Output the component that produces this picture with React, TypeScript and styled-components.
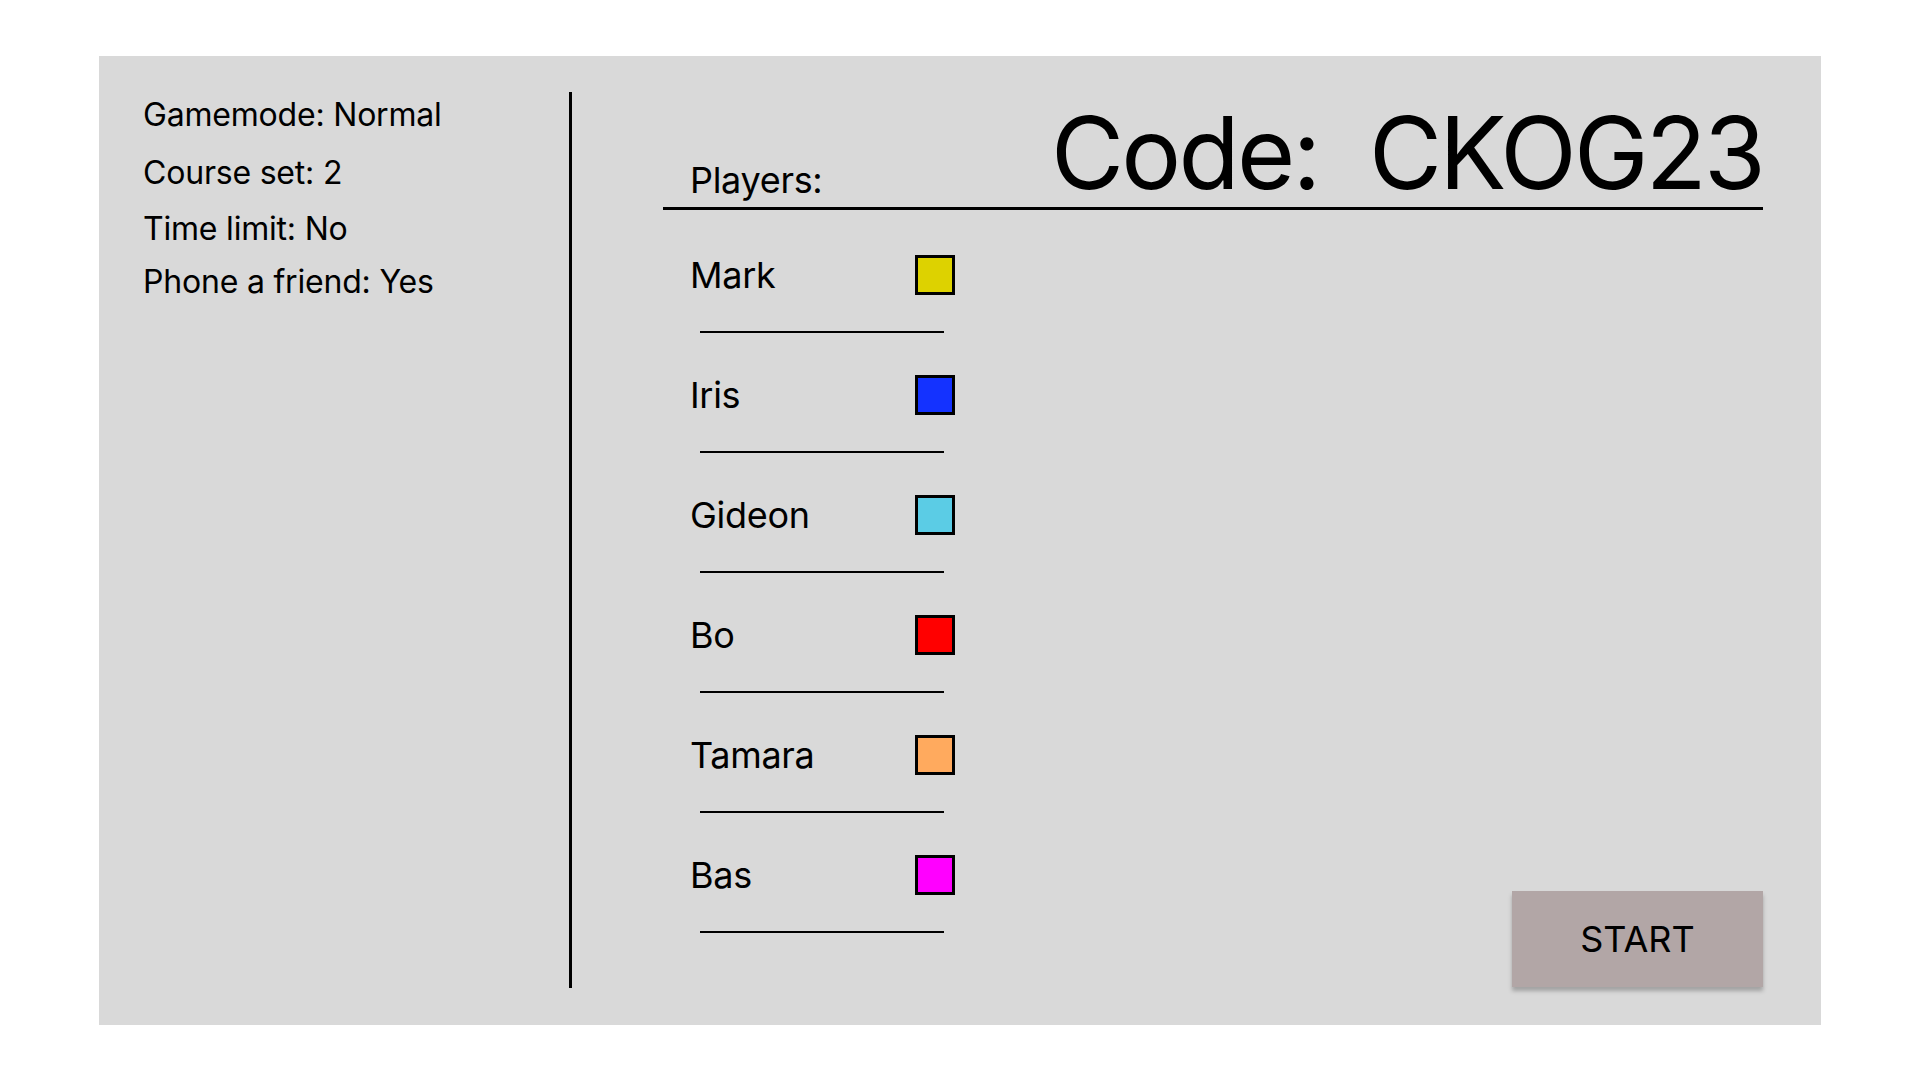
import styled, { createGlobalStyle } from "styled-components";

const players = [
  { name: "Mark", color: "#ddd200" },
  { name: "Iris", color: "#1432ff" },
  { name: "Gideon", color: "#5bcce5" },
  { name: "Bo", color: "#ff0000" },
  { name: "Tamara", color: "#ffaa5e" },
  { name: "Bas", color: "#ff00ff" },
];

// space above each line differs a little in the design
const settings = [
  { text: "Gamemode: Normal", space: 0 },
  { text: "Course set: 2", space: 19 },
  { text: "Time limit: No", space: 17 },
  { text: "Phone a friend: Yes", space: 14 },
];

const App = () => {
  return (
    <>
      <GlobalStyle />
      <Page>
        <Panel>
          <Sidebar>
            {settings.map((s) => (
              <Setting key={s.text} $space={s.space}>
                {s.text}
              </Setting>
            ))}
          </Sidebar>
          <Divider />
          <Main>
            <Header>
              <PlayersLabel>Players:</PlayersLabel>
              <Code>Code:  CKOG23</Code>
            </Header>
            <Body>
              <PlayerList>
                {players.map((p) => (
                  <PlayerRow key={p.name}>
                    <PlayerTop>
                      <PlayerName>{p.name}</PlayerName>
                      <Swatch $color={p.color} />
                    </PlayerTop>
                    <PlayerLine />
                  </PlayerRow>
                ))}
              </PlayerList>
              <StartButton>START</StartButton>
            </Body>
          </Main>
        </Panel>
      </Page>
    </>
  );
};

const GlobalStyle = createGlobalStyle`
  html, body {
    margin: 0;
    padding: 0;
    background: #ffffff;
  }
  body {
    font-family: Inter, "Noto Sans", sans-serif;
    color: #000000;
  }
`;

const Page = styled.div`
  width: 1920px;
  height: 1080px;
  box-sizing: border-box;
  padding: 56px 99px 55px 99px;
`;

const Panel = styled.div`
  display: flex;
  height: 969px;
  background-color: #d9d9d9;
`;

const Sidebar = styled.div`
  width: 470px;
  box-sizing: border-box;
  padding: 39px 0 0 44px;
  display: flex;
  flex-direction: column;
`;

const Setting = styled.div<{ $space: number }>`
  margin-top: ${(props) => props.$space}px;
  font-size: 32px;
  line-height: 39px;
  letter-spacing: -0.2px;
`;

const Divider = styled.div`
  width: 3px;
  margin: 36px 0 37px 0;
  background-color: #000000;
`;

const Main = styled.div`
  flex: 1;
  display: flex;
  flex-direction: column;
  padding: 47px 58px 0 91px;
`;

const Header = styled.div`
  display: flex;
  justify-content: space-between;
  align-items: flex-end;
  padding: 0 0 4px 27px;
  border-bottom: 3px solid #000000;
`;

const PlayersLabel = styled.div`
  font-size: 36px;
  line-height: 36px;
  margin-bottom: 5px;
  letter-spacing: -0.3px;
`;

const Code = styled.div`
  font-size: 100px;
  line-height: 100px;
  letter-spacing: -2.8px;
  white-space: pre;
`;

const Body = styled.div`
  flex: 1;
  display: flex;
  justify-content: space-between;
  align-items: flex-end;
  padding-bottom: 38px;
`;

const PlayerList = styled.div`
  align-self: flex-start;
  display: flex;
  flex-direction: column;
  gap: 42px;
  padding: 45px 0 0 27px;
`;

const PlayerRow = styled.div`
  display: flex;
  flex-direction: column;
`;

const PlayerTop = styled.div`
  display: flex;
  align-items: center;
  height: 40px;
`;

const PlayerName = styled.div`
  width: 225px;
  font-size: 36px;
  line-height: 40px;
  letter-spacing: -0.3px;
`;

const Swatch = styled.div<{ $color: string }>`
  width: 40px;
  height: 40px;
  box-sizing: border-box;
  border: 3px solid #000000;
  background-color: ${(props) => props.$color};
`;

const PlayerLine = styled.div`
  margin: 36px 0 0 10px;
  width: 244px;
  height: 2px;
  background-color: #000000;
`;

const StartButton = styled.button`
  width: 251px;
  height: 96px;
  border: none;
  background-color: #b2a6a6;
  box-shadow: 0 4px 4px rgba(0, 0, 0, 0.25);
  font-family: Inter, "Noto Sans", sans-serif;
  font-size: 36px;
  color: #000000;
  cursor: pointer;
`;

export default App;
